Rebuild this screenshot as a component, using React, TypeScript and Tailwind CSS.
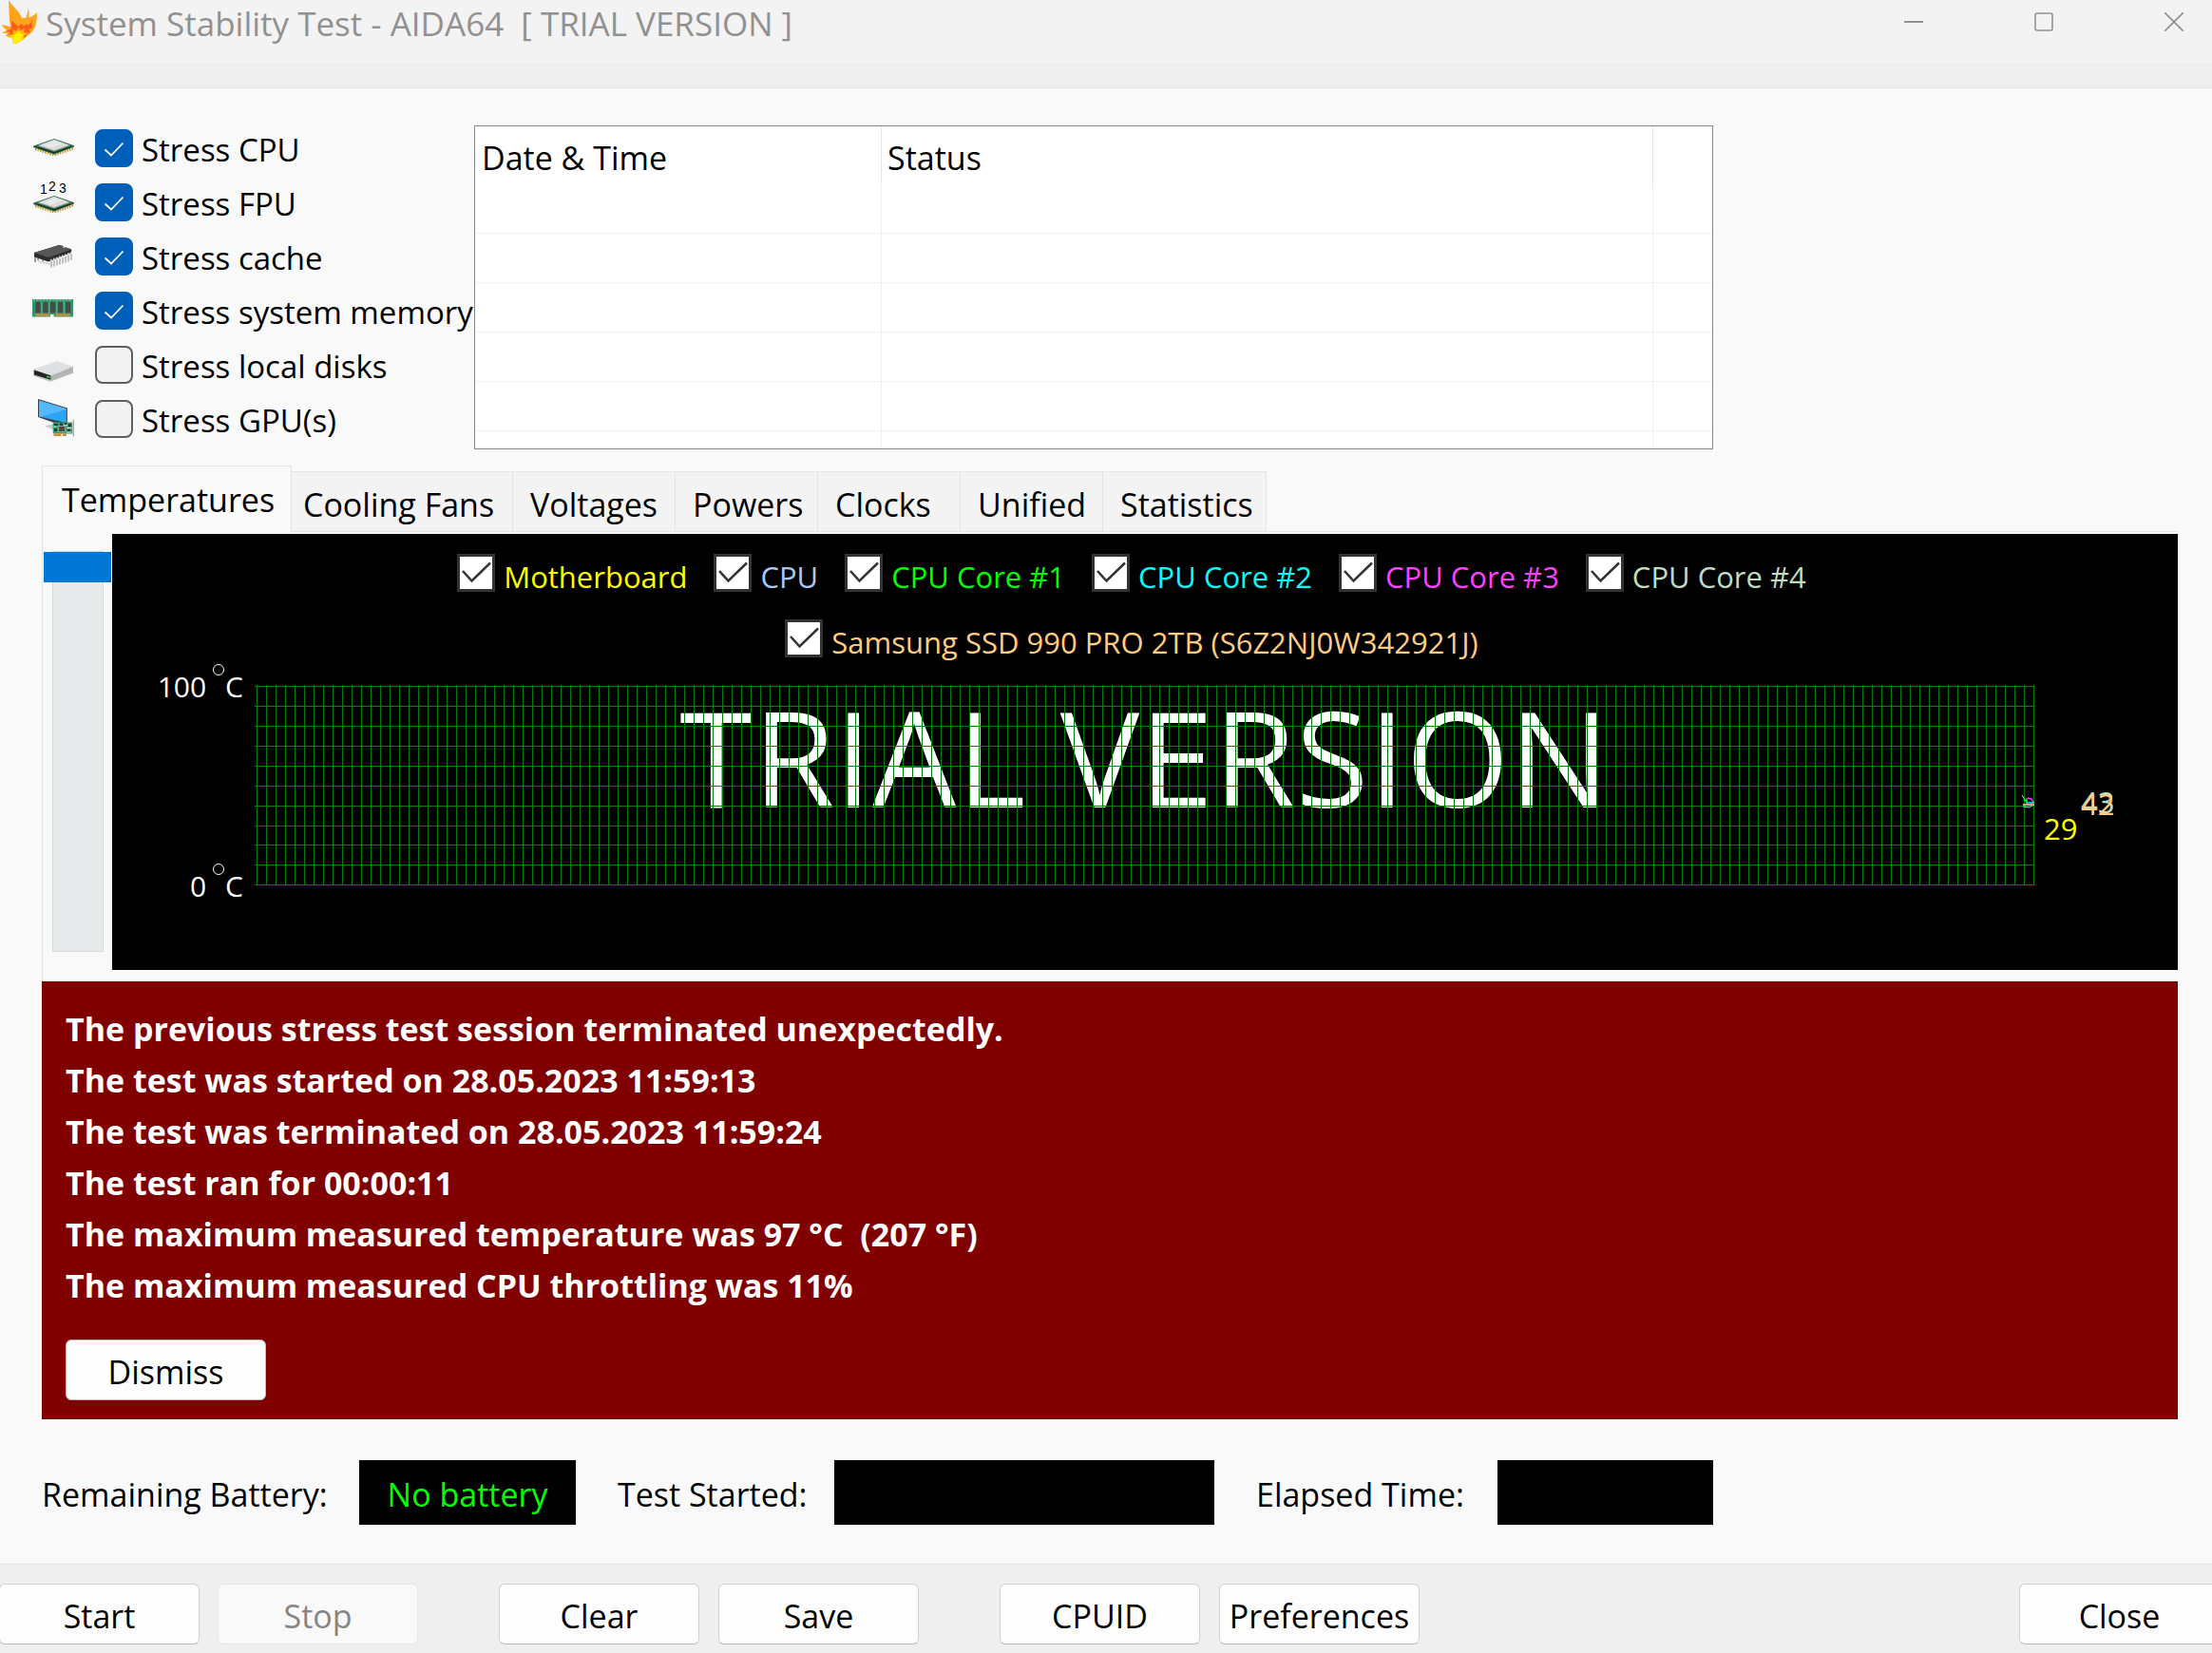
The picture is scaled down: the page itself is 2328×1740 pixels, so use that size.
import { useState } from 'react'
import clsx from 'clsx'

const TABS = [
  { name: 'Temperatures', box: 'w-[263px] pl-5' },
  { name: 'Cooling Fans', box: 'w-[233px] pl-3' },
  { name: 'Voltages', box: 'w-[171px] pl-[18px]' },
  { name: 'Powers', box: 'w-[150px] pl-[18px]' },
  { name: 'Clocks', box: 'w-[150px] pl-[18px]' },
  { name: 'Unified', box: 'w-[150px] pl-[18px]' },
  { name: 'Statistics', box: 'w-[172px] pl-[18px]' },
]

const SENSORS = [
  [
    { name: 'Motherboard', color: 'text-[#ffff00]' },
    { name: 'CPU', color: 'text-[#a6caf0]' },
    { name: 'CPU Core #1', color: 'text-[#00ff00]' },
    { name: 'CPU Core #2', color: 'text-[#00ffff]' },
    { name: 'CPU Core #3', color: 'text-[#ff40ff]' },
    { name: 'CPU Core #4', color: 'text-[#c0dcc0]' },
  ],
  [{ name: 'Samsung SSD 990 PRO 2TB (S6Z2NJ0W342921J)', color: 'text-[#ffcc80]' }],
]

const MESSAGES = [
  'The previous stress test session terminated unexpectedly.',
  'The test was started on 28.05.2023 11:59:13',
  'The test was terminated on 28.05.2023 11:59:24',
  'The test ran for 00:00:11',
  'The maximum measured temperature was 97 °C  (207 °F)',
  'The maximum measured CPU throttling was 11%',
]

const GRID_ROWS = [1, 22, 43, 64, 85, 106, 127, 148, 168, 189, 210]

function FlameIcon() {
  return (
    <svg viewBox="0 0 120 144" className="w-10 h-12 shrink-0" aria-hidden="true">
      <defs>
        <radialGradient id="flame-core" cx="0.45" cy="0.9" r="0.8">
          <stop offset="0" stopColor="#ffff20" />
          <stop offset="0.5" stopColor="#ffd400" />
          <stop offset="1" stopColor="#ff9a10" />
        </radialGradient>
      </defs>
      <path fill="#ffa41c" d="M27 0 C38 20 58 30 70 58 L82 56 C86 46 87 38 89 26 C93 36 92 46 91 56 C101 52 110 47 118 39 C115 56 118 74 108 90 C104 100 96 106 87 112 C80 118 74 126 64 131 L50 138 L40 136 C43 130 40 124 37 121 L17 113 L25 106 L6 104 L22 95 C16 92 9 86 6 78 C15 80 23 82 33 84 C28 60 29 30 27 0Z" />
      <path fill="#ff5a1a" d="M37 65 L58 85 L67 74 L76 83 L82 76 L88 80 L103 65 C100 75 99 84 104 88 L90 93 L96 103 L82 106 L84 115 L70 120 L40 120 L24 112 L34 104 L20 97 L36 92Z" />
      <path fill="url(#flame-core)" d="M40 93 L51 99 L59 84 L65 96 L80 88 L76 102 L90 105 L76 112 L73 124 L62 131 L50 137 L41 136 C44 129 41 123 35 119 L24 112 L42 108Z" />
      <path fill="#fff200" d="M44 112 L53 106 L60 98 L65 107 L74 109 L69 118 L62 129 L49 136 L44 134 L47 125Z" />
    </svg>
  )
}

function CpuDie() {
  return (
    <>
      <path d="M2 20.5 L22 27 L42 20" stroke="#c8962a" strokeWidth="3" strokeDasharray="1.6 1.1" fill="none" />
      <path d="M0 17.7 L22 10 L43 17.3 V18.6 L22 26.4 L0 19Z" fill="#1f6144" />
      <path d="M5 19.4 L22 24.8 L39 19" stroke="#10301f" strokeWidth="1" fill="none" />
      <path d="M4 17.6 L22 11 L39.5 17.3 L22 23.4Z" fill="#8f9391" />
      <path d="M5.5 17 L22 10.8 L38 16.8 L22 22.2Z" fill="#dcdcdc" />
      <path d="M11 17 L22 12.8 L30 15.6 L18 19.4Z" fill="#e9e9e9" />
    </>
  )
}

function DeviceIcon({ kind }: { kind: string }) {
  return (
    <svg viewBox="0 0 44 40" className="w-11 h-10 shrink-0 overflow-visible" aria-hidden="true">
      {kind === 'cpu' && <CpuDie />}
      {kind === 'fpu' && (
        <>
          <g fontFamily="Liberation Sans" fontSize="14" fill="#000">
            <text x="7" y="11">1</text>
            <text x="16" y="8">2</text>
            <text x="27" y="10">3</text>
          </g>
          <g transform="translate(0 3)"><CpuDie /></g>
        </>
      )}
      {kind === 'cache' && (
        <>
          <path d="M2 21 V26 M5 22 V24 M10 23 V26" stroke="#6b6b70" strokeWidth="1.3" />
          <path d="M5 25 L18 28" stroke="#d8d8d8" strokeWidth="2" />
          <path d="M19 25 V31.5 M22 24 V30.5 M25 23 V29.5 M28 22 V28.5 M31 21 V27.5 M34 20 V26.5 M37 18.5 V25.5 M40 17 V24" stroke="#a2a2aa" strokeWidth="1.3" />
          <path d="M1 16 L27 8 L31.5 9 L31 11 L34.5 10.5 L40.3 12.5 L40 16 L16 25.5 L1 20.5Z" fill="#2c2c2c" />
          <path d="M1 16 L27 8 L31.5 9 L31 11 L34.5 10.5 L40.3 12.5 L16 21Z" fill="#565656" />
          <path d="M18 24 L40 16" stroke="#d5d5d8" strokeWidth="1.8" strokeDasharray="1.6 1.6" />
        </>
      )}
      {kind === 'memory' && (
        <>
          <rect x="-1" y="8" width="43" height="18.5" fill="#319768" />
          <path d="M0 9 H41" stroke="#7cc4a0" strokeWidth="1.6" strokeDasharray="2 1.4" />
          <path d="M8.8 11 V23 M16.5 11 V23 M24.5 11 V23 M32.3 11 V23" stroke="#6db896" strokeWidth="1.4" strokeDasharray="1.4 1.2" />
          <path d="M2.3 10.7 h5.4 v11.6 h-5.4z M10.3 10.7 h5.2 v11.6 h-5.2z M18 10.7 h5.4 v11.6 h-5.4z M26 10.7 h5.2 v11.6 h-5.2z M34 10.7 h5.4 v11.6 h-5.4z" fill="#4a4a4a" />
          <path d="M2.3 23.3 h15 v2.4 h-15z M23.7 23.3 h15 v2.4 h-15z" fill="#d08b35" />
          <rect x="18" y="24" width="3.6" height="3" fill="#f9f9f9" />
        </>
      )}
      {kind === 'disk' && (
        <>
          <path d="M0 24.7 L25 16 L42 21.7 L17.7 31.7Z" fill="#dfe0e2" />
          <path d="M42 21.7 V28.7 L17.7 37.7 V31.7Z" fill="#b4b4b6" />
          <path d="M0 24.7 L17.7 31.7 V37.7 L0 31.5Z" fill="#bfbfc1" />
          <path d="M1 25.6 L18.3 31.2 V35.8 L1 30.6Z" fill="#232323" />
          <path d="M14 31.6 L17.7 32.4 V34 L14 33.2Z" fill="#32e032" />
        </>
      )}
      {kind === 'gpu' && (
        <>
          <path d="M12 27.5 L20 25.5 L24 27.5 L20 31Z" fill="#c7ccd0" />
          <path d="M5 -1 L35.8 8.5 V24 L22 24 L5 18Z" fill="#3c4248" />
          <path d="M6 0.4 L34.8 9.3 V24 L6 17.4Z" fill="#2ba5f7" />
          <path d="M6 0.4 L34.8 9.3 V10 L8 17.8 L6 17.4Z" fill="#54b8fa" />
          <rect x="20.7" y="23.5" width="20.5" height="12" fill="#3a9a70" />
          <path d="M22 25 h4 v2 h-4z M28 24.5 h3 v3 h-3z M33 24 h2 v2 h-2z M37 25 h3 v3 h-3z M22 30 h3 v3 h-3z M36 31 h3 v2 h-3z" fill="#2d3a36" />
          <path d="M21.5 28 h3 M32 26.8 h4 M35.5 29.5 h5 M34.8 34 h5" stroke="#d6ede2" strokeWidth="1" />
          <rect x="26.5" y="27.5" width="7" height="6" fill="#4a4a4a" stroke="#b9c6c0" strokeWidth="0.6" />
          <path d="M21.5 35.5 h8 v2.6 h-8z M31 35.5 h4 v2.6 h-4z" fill="#d9892c" />
          <rect x="41.6" y="20.8" width="1.4" height="17.6" fill="#a5a9a9" />
        </>
      )}
    </svg>
  )
}

const STRESS_ITEMS = [
  { id: 'cpu', label: 'Stress CPU', checked: true },
  { id: 'fpu', label: 'Stress FPU', checked: true },
  { id: 'cache', label: 'Stress cache', checked: true },
  { id: 'memory', label: 'Stress system memory', checked: true },
  { id: 'disk', label: 'Stress local disks', checked: false },
  { id: 'gpu', label: 'Stress GPU(s)', checked: false },
]

function StressOption({ id, label, checked }: { id: string; label: string; checked: boolean }) {
  return (
    <div className="flex items-center h-[57px] text-[33px]">
      <DeviceIcon kind={id} />
      <label className="flex items-center ml-[21px]">
        <span className="grid w-10 h-10 shrink-0">
          <input
            type="checkbox"
            defaultChecked={checked}
            className="peer appearance-none col-start-1 row-start-1 w-10 h-10 rounded-lg border-2 border-[#5f5f5f] bg-[#f3f3f3] checked:bg-[#005fb8] checked:border-[#005fb8]"
          />
          <svg viewBox="0 0 40 40" className="col-start-1 row-start-1 w-10 h-10 pointer-events-none opacity-0 peer-checked:opacity-100">
            <path d="M10.5 21.5 L17 27.5 L29.5 14.5" stroke="#fff" strokeWidth="1.8" fill="none" />
          </svg>
        </span>
        <span className="ml-[9px] pt-1 whitespace-nowrap">{label}</span>
      </label>
    </div>
  )
}

function SensorToggle({ name, color }: { name: string; color: string }) {
  return (
    <label className={clsx('flex items-center gap-[9px] h-10 mr-7 text-[31px] whitespace-nowrap', color)}>
      <span className="grid w-10 h-10 shrink-0">
        <input
          type="checkbox"
          defaultChecked
          className="peer appearance-none col-start-1 row-start-1 w-10 h-10 border-3 border-[#333] bg-white"
        />
        <svg viewBox="0 0 40 40" className="col-start-1 row-start-1 w-10 h-10 pointer-events-none opacity-0 peer-checked:opacity-100">
          <path d="M6 18 L15.5 28.5 L35 9.5" stroke="#333" strokeWidth="2.6" fill="none" />
        </svg>
      </span>
      <span className="pt-2">{name}</span>
    </label>
  )
}

function AxisLabel({ value }: { value: string }) {
  return (
    <div className="flex justify-end items-center h-10 text-[30px] text-white">
      <span>{value}</span>
      <svg viewBox="0 0 16 40" className="w-4 h-10 ml-1 overflow-visible" aria-hidden="true">
        <circle cx="9" cy="2" r="5.5" stroke="#fff" strokeWidth="1" fill="none" />
      </svg>
      <span>C</span>
    </div>
  )
}

function TemperatureChart() {
  return (
    <div className="flex mt-[29px]">
      <div className="flex flex-col justify-between w-[150px] -mt-[18px] -mb-5 pr-3">
        <AxisLabel value="100" />
        <AxisLabel value="0" />
      </div>
      <svg className="flex-1 h-[212px] overflow-visible" shapeRendering="crispEdges">
        <defs>
          <pattern id="columns" x="2" width="10" height="212" patternUnits="userSpaceOnUse">
            <rect width="1" height="212" fill="#008000" />
          </pattern>
        </defs>
        <text x="50%" y="129" textAnchor="middle" fontSize="140" fill="#fff">TRIAL VERSION</text>
        <rect width="100%" height="211" fill="url(#columns)" />
        {GRID_ROWS.map(y => (
          <rect key={y} y={y} width="100%" height="1" fill="#008000" />
        ))}
      </svg>
      <svg viewBox="0 0 151 212" className="w-[151px] h-[212px] overflow-visible">
        <path d="M-0.5 0 V211" stroke="#008000" strokeWidth="1" />
        <path d="M-13 116 L-10 121 M-8 119 V124" stroke="#c0dcc0" strokeWidth="1" />
        <path d="M-11 121 L-8 122" stroke="#00ff00" strokeWidth="2" />
        <path d="M-7 119 L-3 120 L-1 124" stroke="#ff40ff" strokeWidth="1.4" fill="none" />
        <path d="M-9 124 H0" stroke="#00ffff" strokeWidth="1.4" />
        <path d="M-12 126 H0" stroke="#ffcc80" strokeWidth="1.6" />
        <path d="M-12 128 L-6 129 L-2 127" stroke="#a6caf0" strokeWidth="1" fill="none" />
        <g fontSize="31">
          <text x="10" y="163" fill="#ffff00">29</text>
          <text x="49" y="135" fill="#c0dcc0">43</text>
          <text x="49" y="137" fill="#ffcc80">42</text>
        </g>
      </svg>
    </div>
  )
}

function PushButton({ children, className, disabled }: { children: string; className?: string; disabled?: boolean }) {
  return (
    <button
      type="button"
      disabled={disabled}
      className={clsx(
        'w-[211px] h-16 shrink-0 rounded-md border border-[#d0d0d0] border-b-[#b8b8b8] bg-[#fdfdfd] pt-1 disabled:border-[#e6e6e6] disabled:bg-[#f9f9f9] disabled:text-[#858585]',
        className,
      )}
    >
      {children}
    </button>
  )
}

export default function App() {
  const [activeTab, setActiveTab] = useState('Temperatures')
  const [showWarning, setShowWarning] = useState(true)

  return (
    <div className="flex flex-col min-h-screen overflow-hidden bg-[#f9f9f9] text-black text-[34px] leading-10 font-['Open_Sans','Noto_Sans',sans-serif]">
      <header className="flex h-[66px] bg-[#f3f3f3] text-[#919191]">
        <FlameIcon />
        <h1 className="ml-2 pt-[5px] text-[35px] leading-10 whitespace-pre">{'System Stability Test - AIDA64  [ TRIAL VERSION ]'}</h1>
        <div className="ml-auto flex h-[46px]">
          <button type="button" aria-label="Minimize" className="w-[137px] grid place-items-center">
            <svg viewBox="0 0 20 20" className="w-5 h-5"><path d="M0 10 H20" stroke="#919191" strokeWidth="2" /></svg>
          </button>
          <button type="button" aria-label="Maximize" className="w-[137px] grid place-items-center">
            <svg viewBox="0 0 20 20" className="w-5 h-5"><rect x="1" y="1" width="18" height="18" rx="2" fill="none" stroke="#919191" strokeWidth="1.6" /></svg>
          </button>
          <button type="button" aria-label="Close window" className="w-[109px] pl-7 grid place-items-center">
            <svg viewBox="0 0 20 20" className="w-5 h-5"><path d="M0 0 L20 20 M20 0 L0 20" stroke="#919191" strokeWidth="1.6" /></svg>
          </button>
        </div>
      </header>
      <div className="h-[27px] bg-[#efefef] border-b border-[#e3e3e3]" />

      <main className="flex-1 pl-[44px] pr-9">
        {/* Stress options and event log */}
        <section className="flex pt-[39px] -ml-[9px]">
          <div className="w-[464px] -mt-[5px]">
            {STRESS_ITEMS.map(item => (
              <StressOption key={item.id} {...item} />
            ))}
          </div>
          <div className="w-[1304px] max-w-full border border-[#828790] bg-white">
            <table className="w-full table-fixed border-separate border-spacing-0 text-left">
              <thead>
                <tr className="h-[61px]">
                  <th className="w-[428px] px-[7px] pt-1 font-normal border-r border-[#e5e5e5]">Date &amp; Time</th>
                  <th className="px-1.5 pt-1 font-normal border-r border-[#e5e5e5]">Status</th>
                  <th className="w-[62px]" />
                </tr>
              </thead>
              <tbody>
                {[0, 1, 2, 3, 4].map(row => (
                  <tr key={row} className="h-[52px]">
                    <td className="border-r border-b border-[#f0f0f0]" />
                    <td className="border-r border-b border-[#f0f0f0]" />
                    <td className="border-b border-[#f0f0f0]" />
                  </tr>
                ))}
                <tr className="h-[18px]">
                  <td className="border-r border-[#f0f0f0]" />
                  <td className="border-r border-[#f0f0f0]" />
                  <td />
                </tr>
              </tbody>
            </table>
          </div>
        </section>

        {/* Tabs */}
        <div role="tablist" className="flex items-end mt-[17px]">
          {TABS.map(tab => (
            <button
              key={tab.name}
              type="button"
              role="tab"
              aria-selected={tab.name === activeTab}
              onClick={() => setActiveTab(tab.name)}
              className={clsx(
                'border-t border-r border-[#e5e5e5] text-left whitespace-nowrap',
                tab.box,
                tab.name === activeTab ? 'h-[70px] -mb-px relative border-l bg-[#f9f9f9]' : 'h-[63px] bg-[#f3f3f3] pt-1.5',
              )}
            >
              {tab.name}
            </button>
          ))}
        </div>

        <section className="flex border-t border-l border-[#e5e5e5] pt-0.5 pb-3">
          <input
            type="range"
            aria-label="Graph scale"
            defaultValue={0}
            className="appearance-none bg-transparent w-[73px] h-[422px] mt-[18px] shrink-0 [writing-mode:vertical-lr] [&::-webkit-slider-runnable-track]:w-[54px] [&::-webkit-slider-runnable-track]:h-full [&::-webkit-slider-runnable-track]:bg-[#e6eaea] [&::-webkit-slider-runnable-track]:border [&::-webkit-slider-runnable-track]:border-[#d5d9d9] [&::-webkit-slider-thumb]:appearance-none [&::-webkit-slider-thumb]:w-[71px] [&::-webkit-slider-thumb]:h-8 [&::-webkit-slider-thumb]:-ml-[10px] [&::-webkit-slider-thumb]:bg-[#0078d7]"
          />
          <div className="flex-1 min-w-0 h-[459px] bg-black pt-[21px]">
            <div className="flex flex-col gap-[29px]">
              {SENSORS.map((row, i) => (
                <div key={i} className="flex justify-center">
                  {row.map(sensor => (
                    <SensorToggle key={sensor.name} {...sensor} />
                  ))}
                </div>
              ))}
            </div>
            <TemperatureChart />
          </div>
        </section>

        {/* Previous session warning */}
        {showWarning && (
          <section className="bg-[#800000] px-[25px] pt-[23px] pb-5">
            {MESSAGES.map(message => (
              <p key={message} className="text-white font-bold leading-[54px] whitespace-pre">{message}</p>
            ))}
            <button
              type="button"
              onClick={() => setShowWarning(false)}
              className="w-[211px] h-16 mt-[30px] pt-1 rounded-md border border-[#b8b8b8] bg-[#fdfdfd]"
            >
              Dismiss
            </button>
          </section>
        )}

        {/* Test status */}
        <section className="flex items-center mt-[43px] mb-[41px]">
          <span className="w-[334px] pt-1">Remaining Battery:</span>
          <output className="w-[228px] h-[68px] bg-black text-[#00ff00] text-center pt-4">No battery</output>
          <span className="w-[272px] pl-11 pt-1">Test Started:</span>
          <output className="w-[400px] h-[68px] bg-black" />
          <span className="w-[298px] pl-11 pt-1">Elapsed Time:</span>
          <output className="w-[227px] h-[68px] bg-black" />
        </section>
      </main>

      <footer className="flex h-[94px] pt-5 -ml-px -mr-2 bg-[#efefef] border-t border-[#e3e3e3]">
        <PushButton>Start</PushButton>
        <PushButton disabled className="ml-[19px]">Stop</PushButton>
        <PushButton className="ml-[85px]">Clear</PushButton>
        <PushButton className="ml-5">Save</PushButton>
        <PushButton className="ml-[85px]">CPUID</PushButton>
        <PushButton className="ml-5">Preferences</PushButton>
        <PushButton className="ml-auto">Close</PushButton>
      </footer>
    </div>
  )
}
